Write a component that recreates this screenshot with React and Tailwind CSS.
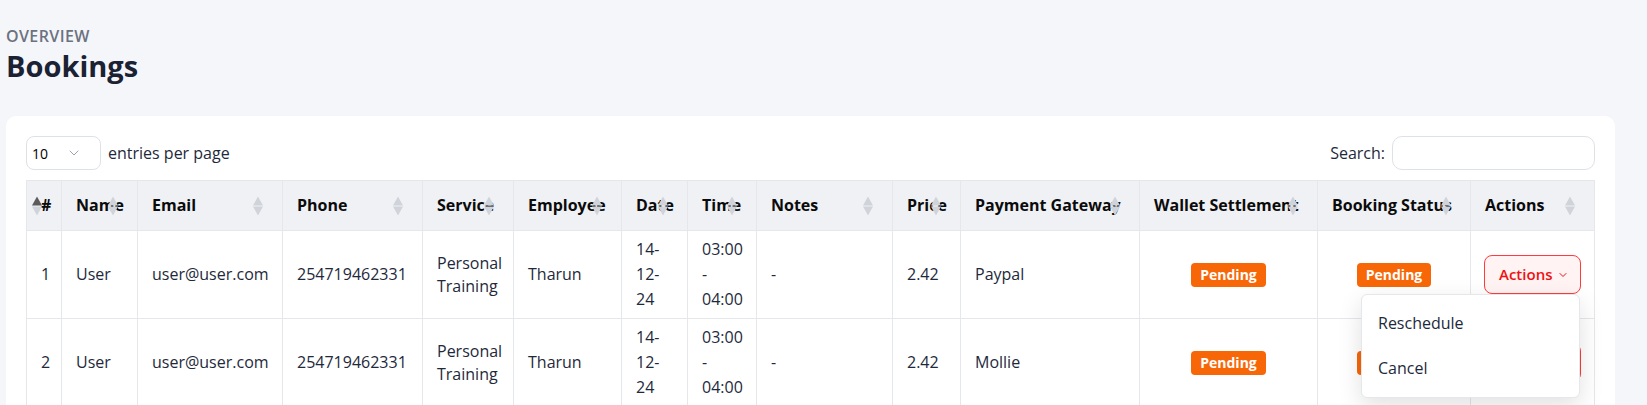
import React from "react";
import { ChevronDown } from "lucide-react";

const columns = [
  { label: "#", w: "w-[35px]", center: true, sorted: true },
  { label: "Name", w: "w-[76px]" },
  { label: "Email", w: "w-[145px]" },
  { label: "Phone", w: "w-[140px]" },
  { label: "Service", w: "w-[91px]" },
  { label: "Employee", w: "w-[108px]" },
  { label: "Date", w: "w-[66px]" },
  { label: "Time", w: "w-[69px]" },
  { label: "Notes", w: "w-[136px]" },
  { label: "Price", w: "w-[68px]" },
  { label: "Payment Gateway", w: "w-[179px]" },
  { label: "Wallet Settlement", w: "w-[178px]" },
  { label: "Booking Status", w: "w-[153px]" },
  { label: "Actions", w: "w-[124px]" },
];

const rows = [
  { id: 1, gateway: "Paypal", menu: true },
  { id: 2, gateway: "Mollie", menu: false },
];

const SortArrows = ({ sorted }) => (
  <svg
    width="10"
    height="19"
    viewBox="0 0 10 19"
    className="absolute right-[19px] top-1/2 -translate-y-1/2"
  >
    <polygon points="5,0 10,9 0,9" fill={sorted ? "#5b5b5b" : "#d0d3d9"} />
    <polygon points="0,10 10,10 5,19" fill="#d0d3d9" />
  </svg>
);

const Badge = () => (
  <div className="flex justify-center">
    <span className="rounded-[4px] bg-[#f76707] px-[9px] text-[14px] font-bold leading-6 text-white">
      Pending
    </span>
  </div>
);

const cell = "border border-[#e5e7eb] px-[14px] py-[6px] align-middle";

const App = () => {
  return (
    <div className="min-h-screen bg-[#f5f6fa] px-[6px] pt-[26px] font-['Open_Sans',sans-serif] text-[#1e293b]">
      <p className="text-[16px] font-semibold leading-5 tracking-wide text-[#6b7280]">
        OVERVIEW
      </p>
      <h1 className="mt-0.5 text-[29px] font-bold leading-9 text-[#1a2234]">
        Bookings
      </h1>

      <div className="mt-[32px] w-[1609px] rounded-[10px] bg-white px-5 pt-5 pb-6">
        <div className="mb-2.5 flex items-center justify-between">
          <div className="flex items-center gap-[7px]">
            <div className="flex h-[34px] w-[75px] items-center justify-between rounded-lg border border-[#dde1e8] pl-[5px] pr-[18px] text-[14px] text-black">
              <span>10</span>
              <ChevronDown className="h-4 w-4 text-[#9ca3af]" strokeWidth={1.5} />
            </div>
            <span className="text-[16px]">entries per page</span>
          </div>
          <div className="flex items-center gap-[7px]">
            <span className="text-[16px]">Search:</span>
            <div className="h-[34px] w-[203px] rounded-[10px] border border-[#dde1e8]" />
          </div>
        </div>

        <table className="w-[1568px] table-fixed border-collapse text-[16px] leading-[25px]">
          <thead>
            <tr className="bg-[#eff1f5]">
              {columns.map((c) => (
                <th
                  key={c.label}
                  className={`${c.w} relative border border-[#e5e7eb] px-[14px] py-[12px] whitespace-nowrap font-bold text-[#0b0b0b] ${
                    c.center ? "text-center" : "text-left"
                  }`}
                >
                  {c.label}
                  <SortArrows sorted={c.sorted} />
                </th>
              ))}
            </tr>
          </thead>
          <tbody>
            {rows.map((r) => (
              <tr key={r.id}>
                <td className={`${cell} text-center`}>{r.id}</td>
                <td className={cell}>User</td>
                <td className={cell}>user@user.com</td>
                <td className={cell}>254719462331</td>
                <td className={`${cell} leading-[23px]`}>Personal Training</td>
                <td className={cell}>Tharun</td>
                <td className={`${cell} break-words`}>14-12-24</td>
                <td className={cell}>03:00 - 04:00</td>
                <td className={cell}>-</td>
                <td className={cell}>2.42</td>
                <td className={cell}>{r.gateway}</td>
                <td className={cell}>
                  <Badge />
                </td>
                <td className={cell}>
                  <Badge />
                </td>
                <td className={`${cell} pl-[13px]`}>
                  <div className="relative">
                    <button className="flex h-[39px] w-[97px] items-center gap-[5px] rounded-lg border border-[#ff3b3b] bg-[#fff3f3] pl-[14px] text-[15px] font-semibold text-[#ee1111]">
                      Actions
                      <ChevronDown className="h-3 w-3" strokeWidth={2} />
                    </button>
                    {r.menu && (
                      <div className="absolute right-0 top-[39px] z-10 w-[219px] rounded-md border border-[#e5e7eb] bg-white py-1.5 shadow-[0_8px_24px_rgba(0,0,0,0.12)]">
                        <div className="flex h-[45px] items-center px-4 font-medium text-[#1e293b]">
                          Reschedule
                        </div>
                        <div className="flex h-[45px] items-center px-4 font-medium text-[#1e293b]">
                          Cancel
                        </div>
                      </div>
                    )}
                  </div>
                </td>
              </tr>
            ))}
          </tbody>
        </table>
      </div>
    </div>
  );
};

export default App;
